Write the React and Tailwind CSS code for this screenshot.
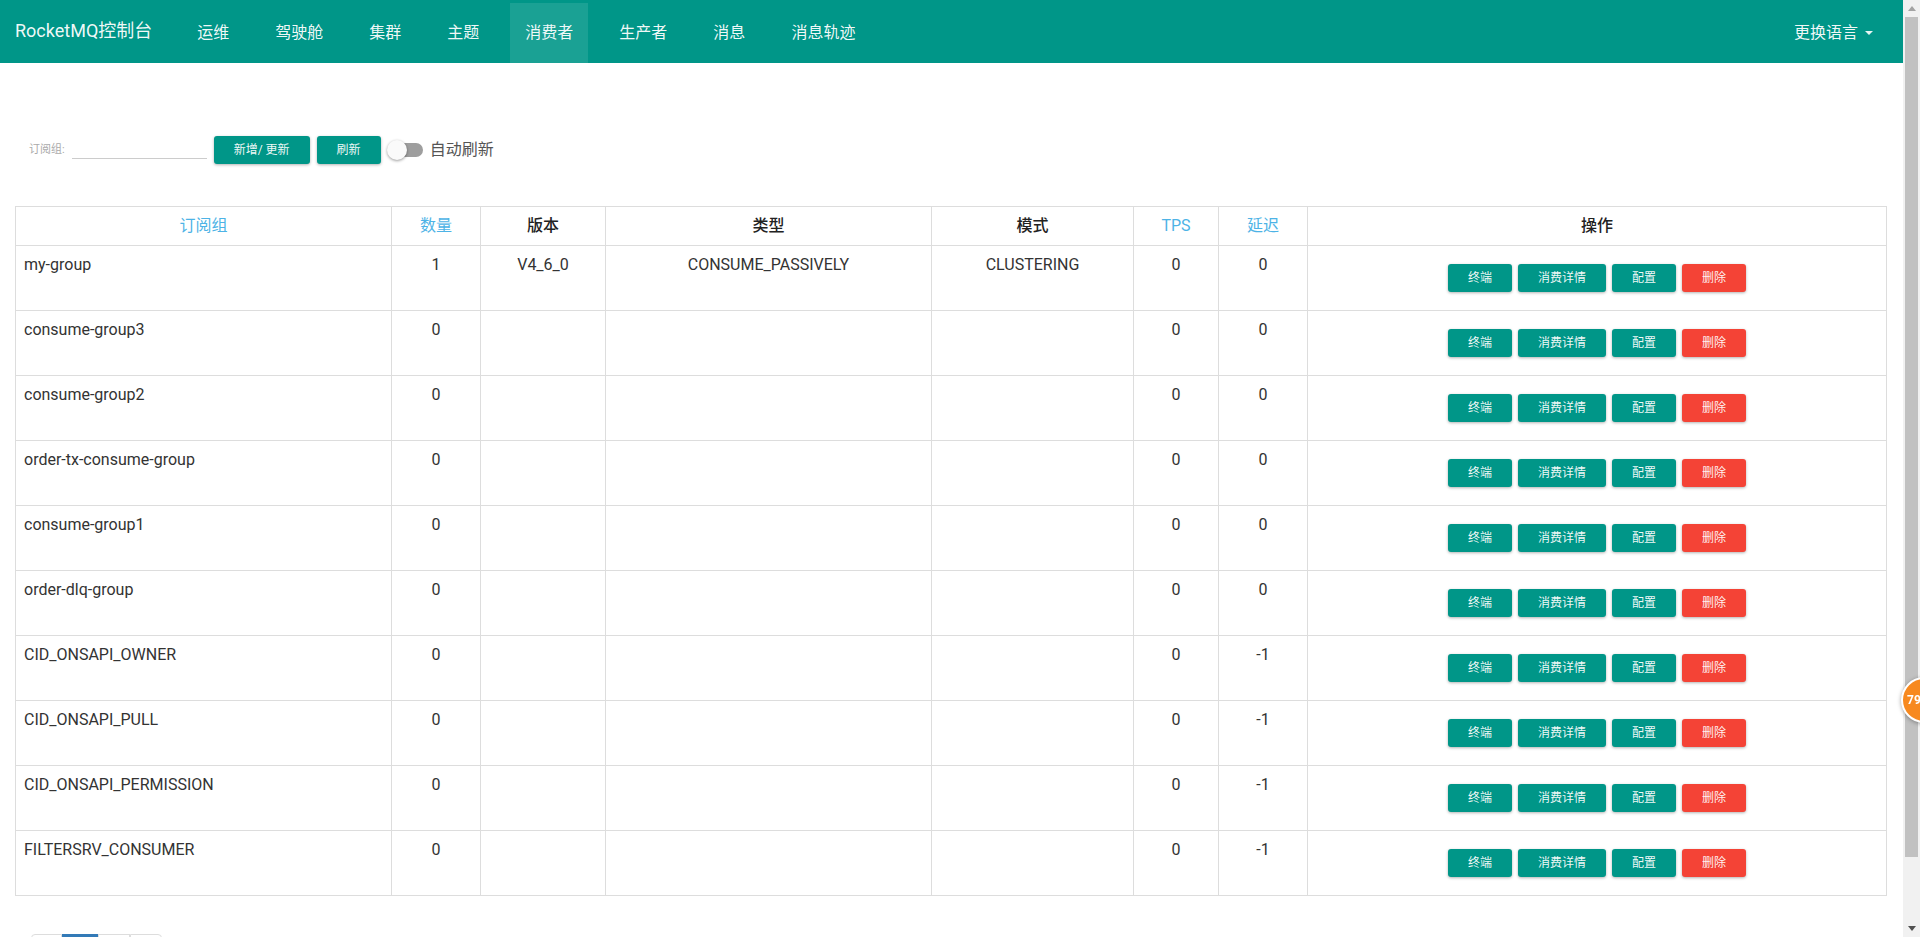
import React from 'react';

const FONT = { fontFamily: 'Roboto, "Noto Sans CJK SC", "Noto Sans", sans-serif' };

const navItems = ['运维', '驾驶舱', '集群', '主题', '消费者', '生产者', '消息', '消息轨迹'];

const rows = [
  { name: 'my-group', count: 1, version: 'V4_6_0', type: 'CONSUME_PASSIVELY', mode: 'CLUSTERING', tps: 0, delay: 0 },
  { name: 'consume-group3', count: 0, tps: 0, delay: 0 },
  { name: 'consume-group2', count: 0, tps: 0, delay: 0 },
  { name: 'order-tx-consume-group', count: 0, tps: 0, delay: 0 },
  { name: 'consume-group1', count: 0, tps: 0, delay: 0 },
  { name: 'order-dlq-group', count: 0, tps: 0, delay: 0 },
  { name: 'CID_ONSAPI_OWNER', count: 0, tps: 0, delay: -1 },
  { name: 'CID_ONSAPI_PULL', count: 0, tps: 0, delay: -1 },
  { name: 'CID_ONSAPI_PERMISSION', count: 0, tps: 0, delay: -1 },
  { name: 'FILTERSRV_CONSUMER', count: 0, tps: 0, delay: -1 },
];

// 表头：sortable 列显示为蓝色
const headers = [
  { label: '订阅组', blue: true, w: 'w-[376px]' },
  { label: '数量', blue: true, w: 'w-[89px]' },
  { label: '版本', w: 'w-[125px]' },
  { label: '类型', w: 'w-[326px]' },
  { label: '模式', w: 'w-[202px]' },
  { label: 'TPS', blue: true, w: 'w-[85px]' },
  { label: '延迟', blue: true, w: 'w-[89px]' },
  { label: '操作', w: 'w-[579px]' },
];

const Btn = ({ children, red = false }) => (
  <button
    className={`h-[28px] px-5 rounded-[3px] text-[12px] text-white/95 shadow-[0_1px_3px_rgba(0,0,0,0.3)] ${
      red ? 'bg-[#f44336]' : 'bg-[#009688]'
    }`}
  >
    {children}
  </button>
);

const Navbar = () => (
  <div className="h-[63px] bg-[#009688] flex items-start px-[15px] text-white/95">
    <div className="h-[60px] flex items-center text-[18px] pr-[30px]">RocketMQ控制台</div>
    <ul className="flex gap-[16px]">
      {navItems.map((item) => (
        <li
          key={item}
          className={`mt-[3px] h-[60px] px-[15px] flex items-center text-[16px] ${
            item === '消费者' ? 'bg-white/10' : ''
          }`}
        >
          {item}
        </li>
      ))}
    </ul>
    <div className="ml-auto mt-[3px] h-[59px] px-[15px] flex items-center text-[16px] gap-[7px]">
      更换语言
      <span className="w-0 h-0 border-l-[4px] border-r-[4px] border-t-[4px] border-l-transparent border-r-transparent border-t-white/90" />
    </div>
  </div>
);

const Toolbar = () => (
  <div className="mt-[73px] h-[28px] pl-[14px] flex items-center">
    <span className="text-[11px] text-[#aaa]">订阅组:</span>
    <div className="ml-[7px] w-[135px] h-[28px] border-b border-[#ccc] translate-y-[-5px]" />
    <div className="ml-[7px] flex gap-[7px]">
      <Btn>新增/ 更新</Btn>
      <Btn>刷新</Btn>
    </div>
    <div className="ml-[6px] relative w-[36px] h-[20px] flex items-center">
      <div className="ml-[2px] w-[34px] h-[14px] rounded-full bg-[#9e9e9e]" />
      <div className="absolute left-0 top-0 w-[20px] h-[20px] rounded-full bg-[#fafafa] shadow-[0_1px_3px_rgba(0,0,0,0.4)]" />
    </div>
    <span className="ml-[7px] text-[16px] text-[#555]">自动刷新</span>
  </div>
);

const ConsumerTable = () => (
  <table className="mt-[42px] w-[1871px] table-fixed border-collapse border border-[#ddd] text-[16px] text-[#333]">
    <thead>
      <tr className="h-[39px]">
        {headers.map((h) => (
          <th
            key={h.label}
            className={`${h.w} border border-[#ddd] text-center font-medium text-[16px] ${
              h.blue ? 'text-[#4db3e6] font-normal' : 'text-[#222]'
            }`}
          >
            {h.label}
          </th>
        ))}
      </tr>
    </thead>
    <tbody>
      {rows.map((r) => (
        <tr key={r.name} className="h-[65px]">
          <td className="border border-[#ddd] align-top px-2 pt-[7px] text-left">{r.name}</td>
          <td className="border border-[#ddd] align-top px-2 pt-[7px] text-center">{r.count}</td>
          <td className="border border-[#ddd] align-top px-2 pt-[7px] text-center">{r.version}</td>
          <td className="border border-[#ddd] align-top px-2 pt-[7px] text-center">{r.type}</td>
          <td className="border border-[#ddd] align-top px-2 pt-[7px] text-center">{r.mode}</td>
          <td className="border border-[#ddd] align-top px-2 pt-[7px] text-center">{r.tps}</td>
          <td className="border border-[#ddd] align-top px-2 pt-[7px] text-center">{r.delay}</td>
          <td className="border border-[#ddd] align-middle p-2">
            <div className="flex justify-center gap-[6px]">
              <Btn>终端</Btn>
              <Btn>消费详情</Btn>
              <Btn>配置</Btn>
              <Btn red>删除</Btn>
            </div>
          </td>
        </tr>
      ))}
    </tbody>
  </table>
);

// 分页只露出顶边
const Pagination = () => (
  <ul className="mt-[38px] ml-[16px] flex">
    <li className="w-[31px] h-[34px] border border-[#ddd] rounded-l-[4px]" />
    <li className="w-[36px] h-[34px] border border-[#337ab7] bg-[#337ab7]" />
    <li className="w-[32px] h-[34px] border border-[#ddd]" />
    <li className="w-[32px] h-[34px] border border-[#ddd] rounded-r-[4px]" />
  </ul>
);

const Scrollbar = () => (
  <div className="w-[17px] h-[937px] bg-[#f1f1f1] flex flex-col items-center">
    <div className="h-[17px] w-full flex items-center justify-center">
      <svg width="8" height="5" viewBox="0 0 8 5"><path d="M0 5 L4 0 L8 5 Z" fill="#a3a3a3" /></svg>
    </div>
    <div className="w-[13px] h-[840px] bg-[#c1c1c1]" />
    <div className="flex-1" />
    <div className="h-[17px] w-full flex items-center justify-center">
      <svg width="8" height="5" viewBox="0 0 8 5"><path d="M0 0 L8 0 L4 5 Z" fill="#505050" /></svg>
    </div>
  </div>
);

export default function App() {
  return (
    <div className="w-[1920px] h-[937px] overflow-hidden flex bg-white" style={FONT}>
      <div className="w-[1903px] h-[937px] overflow-hidden">
        <Navbar />
        <div className="px-[15px]">
          <Toolbar />
          <ConsumerTable />
          <Pagination />
        </div>
      </div>
      <Scrollbar />
      {/* 悬浮角标 */}
      <div className="fixed left-[1901px] top-[677px] w-[46px] h-[46px] rounded-full bg-[#f7891f] border-2 border-white shadow-[0_1px_4px_rgba(0,0,0,0.35)] flex items-center pl-[4px] text-white text-[12px] font-bold">
        79
      </div>
    </div>
  );
}
